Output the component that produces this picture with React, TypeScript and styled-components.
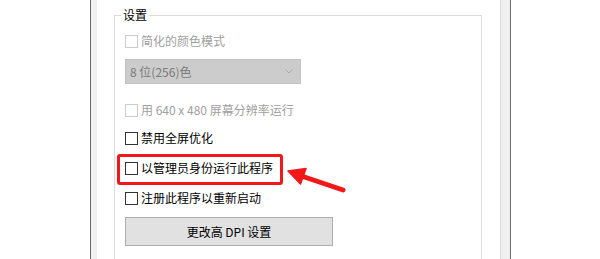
import React from "react";
import styled, { createGlobalStyle } from "styled-components";

const GlobalStyle = createGlobalStyle`
  html, body {
    margin: 0;
    padding: 0;
    background: #ffffff;
    overflow: hidden;
  }
  body {
    font-family: "Noto Sans CJK SC", "Noto Sans", "Liberation Sans", sans-serif;
    font-size: 12px;
    color: #000000;
  }
`;

const Screen = styled.div`
  display: flex;
  width: 600px;
  height: 259px;
  padding-left: 90px;
  box-sizing: border-box;
  overflow: hidden;
`;

const Window = styled.div`
  display: flex;
  width: 421px;
  height: 100%;
  box-sizing: border-box;
  border-left: 1px solid #6b6b6b;
  border-right: 1px solid #6b6b6b;
  background: #f0f0f0;
  padding: 0 9px 0 6px;
`;

const Page = styled.div`
  flex: 1;
  background: #ffffff;
  border-right: 1px solid #d9d9d9;
  padding: 7px 18px 0 17px;
  overflow: hidden;
`;

const Group = styled.fieldset`
  margin: 0;
  min-width: 0;
  padding: 0 10px 60px;
  border: 1px solid #dcdcdc;
  display: flex;
  flex-direction: column;
  align-items: flex-start;
`;

const Legend = styled.legend`
  margin-left: -4px;
  padding: 0 2px;
  font-size: 12px;
  line-height: 16px;
  color: #000000;
`;

const Row = styled.label<{ top: number; disabled?: boolean }>`
  position: relative;
  display: flex;
  align-items: center;
  height: 16px;
  margin-top: ${({ top }) => top}px;
  line-height: 16px;
  color: ${({ disabled }) => (disabled ? "#a0a0a0" : "#000000")};
  white-space: nowrap;
`;

const Box = styled.span<{ disabled?: boolean }>`
  width: 13px;
  height: 13px;
  box-sizing: border-box;
  border: 1px solid ${({ disabled }) => (disabled ? "#cccccc" : "#333333")};
  background: #ffffff;
  margin-right: 3px;
  flex: none;
`;

const Select = styled.div`
  display: flex;
  align-items: center;
  justify-content: space-between;
  width: 176px;
  height: 25px;
  box-sizing: border-box;
  margin-top: 10px;
  padding: 0 7px 0 4px;
  background: #cccccc;
  border: 1px solid #c2c2c2;
  color: #7a7a7a;
  white-space: pre;
`;

const Button = styled.div`
  display: flex;
  align-items: center;
  justify-content: center;
  width: 208px;
  height: 29px;
  box-sizing: border-box;
  margin-top: 11px;
  background: #e1e1e1;
  border: 1px solid #adadad;
  color: #000000;
`;

const Highlight = styled.span`
  position: absolute;
  left: -8px;
  top: -6px;
  width: 166px;
  height: 31px;
  box-sizing: border-box;
  border: 3px solid #f01818;
  border-radius: 3px;
`;

const Arrow = styled.svg`
  position: absolute;
  left: 160px;
  top: 0;
  overflow: visible;
`;

const Check: React.FC<{ label: string; top: number; disabled?: boolean; children?: React.ReactNode }> = ({
  label,
  top,
  disabled,
  children,
}) => (
  <Row top={top} disabled={disabled}>
    <Box disabled={disabled} />
    {label}
    {children}
  </Row>
);

export default function App() {
  return (
    <>
      <GlobalStyle />
      <Screen>
        <Window>
          <Page>
            <Group>
              <Legend>设置</Legend>
              <Check label="简化的颜色模式" top={10} disabled />
              <Select>
                <span>8 位(256)色</span>
                <svg width="8" height="5" viewBox="0 0 8 5">
                  <polyline points="0.5,0.5 4,4 7.5,0.5" fill="none" stroke="#a9a9a9" strokeWidth="1" />
                </svg>
              </Select>
              <Check label="用 640 x 480 屏幕分辨率运行" top={18} disabled />
              <Check label="禁用全屏优化" top={12} />
              <Check label="以管理员身份运行此程序" top={14}>
                <Highlight />
                <Arrow width="70" height="40" viewBox="0 0 70 40">
                  <line x1="15" y1="15.5" x2="58" y2="30" stroke="#f01818" strokeWidth="5" strokeLinecap="round" />
                  <polygon points="3,11 21,8.5 15.5,24" fill="#f01818" stroke="#f01818" strokeWidth="1.5" strokeLinejoin="round" />
                </Arrow>
              </Check>
              <Check label="注册此程序以重新启动" top={14} />
              <Button>更改高 DPI 设置</Button>
            </Group>
          </Page>
        </Window>
      </Screen>
    </>
  );
}
